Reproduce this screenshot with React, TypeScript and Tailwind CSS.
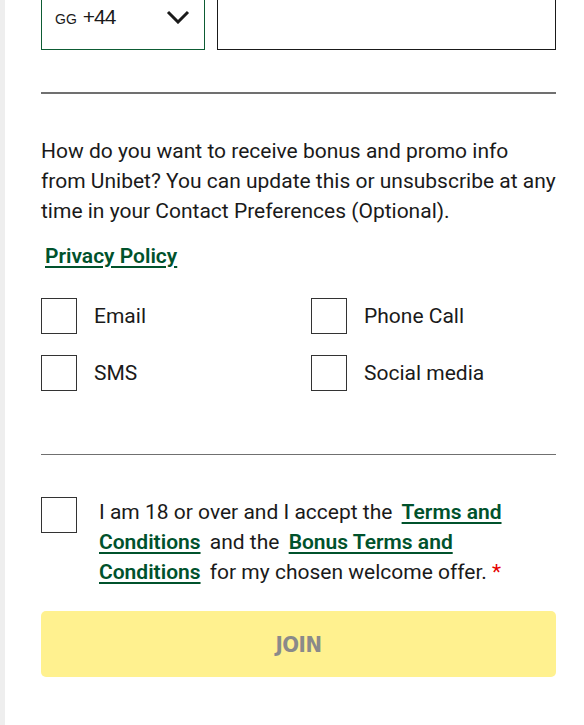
import { useState } from "react";

const contactOptions = ["Email", "Phone Call", "SMS", "Social media"];

function Checkbox({ checked, onChange }: { checked: boolean; onChange: () => void }) {
  return (
    <button
      type="button"
      onClick={onChange}
      className="w-[36px] h-[36px] shrink-0 border border-[#333333] bg-white flex items-center justify-center"
    >
      {checked && (
        <svg width="22" height="22" viewBox="0 0 24 24" fill="none" stroke="#005a2b" strokeWidth="3">
          <path d="M4 12l5 5L20 6" />
        </svg>
      )}
    </button>
  );
}

export default function App() {
  const [phone, setPhone] = useState("");
  const [prefs, setPrefs] = useState<{ [key: string]: boolean }>({});
  const [accepted, setAccepted] = useState(false);

  return (
    <div className="min-h-screen flex bg-white overflow-hidden" style={{ fontFamily: "Roboto, sans-serif" }}>
      <div className="w-[5px] shrink-0 bg-[#eeeeee]" />
      <div className="flex-1 pl-[36px] pr-[28px] text-[#1a1a1a]">
        <div className="flex gap-[12px] -mt-[14px]">
          <div className="w-[164px] h-[64px] shrink-0 border border-[#0d5c34] flex items-start justify-between pl-[13px] pr-[14px] pt-[19px]">
            <span className="flex items-baseline" style={{ fontFamily: "'Liberation Sans', Arial, sans-serif" }}>
              <span className="text-[14px] mr-[6px]">GG</span>
              <span className="text-[21px] leading-none tracking-[-1px]">+44</span>
            </span>
            <svg width="24" height="14" viewBox="0 0 24 14" fill="none" stroke="#1a1a1a" strokeWidth="3" className="mt-[4px]">
              <path d="M2 2l10 10L22 2" />
            </svg>
          </div>
          <input
            value={phone}
            onChange={(e) => setPhone(e.target.value)}
            className="flex-1 min-w-0 h-[64px] border-[1.5px] border-[#1a1a1a] px-3 text-[21px] outline-none"
          />
        </div>

        <div className="mt-[42px] h-[2px] bg-[#707070]" />

        <p className="mt-[42px] text-[21px] leading-[30px]">
          How do you want to receive bonus and promo info from Unibet? You can update this or unsubscribe at any
          time in your Contact Preferences (Optional).
        </p>

        <a
          href="#"
          className="inline-block ml-[4px] mt-[15px] text-[21px] leading-[30px] font-semibold text-[#00522c] underline decoration-2 underline-offset-[3px]"
        >
          Privacy Policy
        </a>

        <div className="mt-[27px] grid grid-cols-2 gap-x-[25px] gap-y-[21px]">
          {contactOptions.map((opt) => (
            <label key={opt} className="flex items-center gap-[17px] text-[21px] leading-[30px]">
              <Checkbox checked={!!prefs[opt]} onChange={() => setPrefs({ ...prefs, [opt]: !prefs[opt] })} />
              {opt}
            </label>
          ))}
        </div>

        <div className="mt-[63px] h-px bg-[#707070]" />

        <div className="mt-[42px] flex items-start gap-[22px]">
          <Checkbox checked={accepted} onChange={() => setAccepted(!accepted)} />
          <p className="text-[21px] leading-[30px]">
            I am 18 or over and I accept the{" "}
            <a href="#" className="mx-[4px] font-semibold text-[#00522c] underline decoration-2 underline-offset-[3px]">
              Terms and Conditions
            </a>{" "}
            and the{" "}
            <a href="#" className="mx-[4px] font-semibold text-[#00522c] underline decoration-2 underline-offset-[3px]">
              Bonus Terms and Conditions
            </a>{" "}
            for my chosen welcome offer. <span className="text-[#e60000]">*</span>
          </p>
        </div>

        <button
          type="button"
          className="mt-[24px] w-full h-[66px] rounded-[5px] bg-[#fff18f] text-[#8a8a8a] text-[22px] font-bold tracking-[-0.5px]"
          style={{ fontFamily: "'DejaVu Sans Condensed', 'DejaVu Sans', sans-serif" }}
        >
          JOIN
        </button>
      </div>
    </div>
  );
}
